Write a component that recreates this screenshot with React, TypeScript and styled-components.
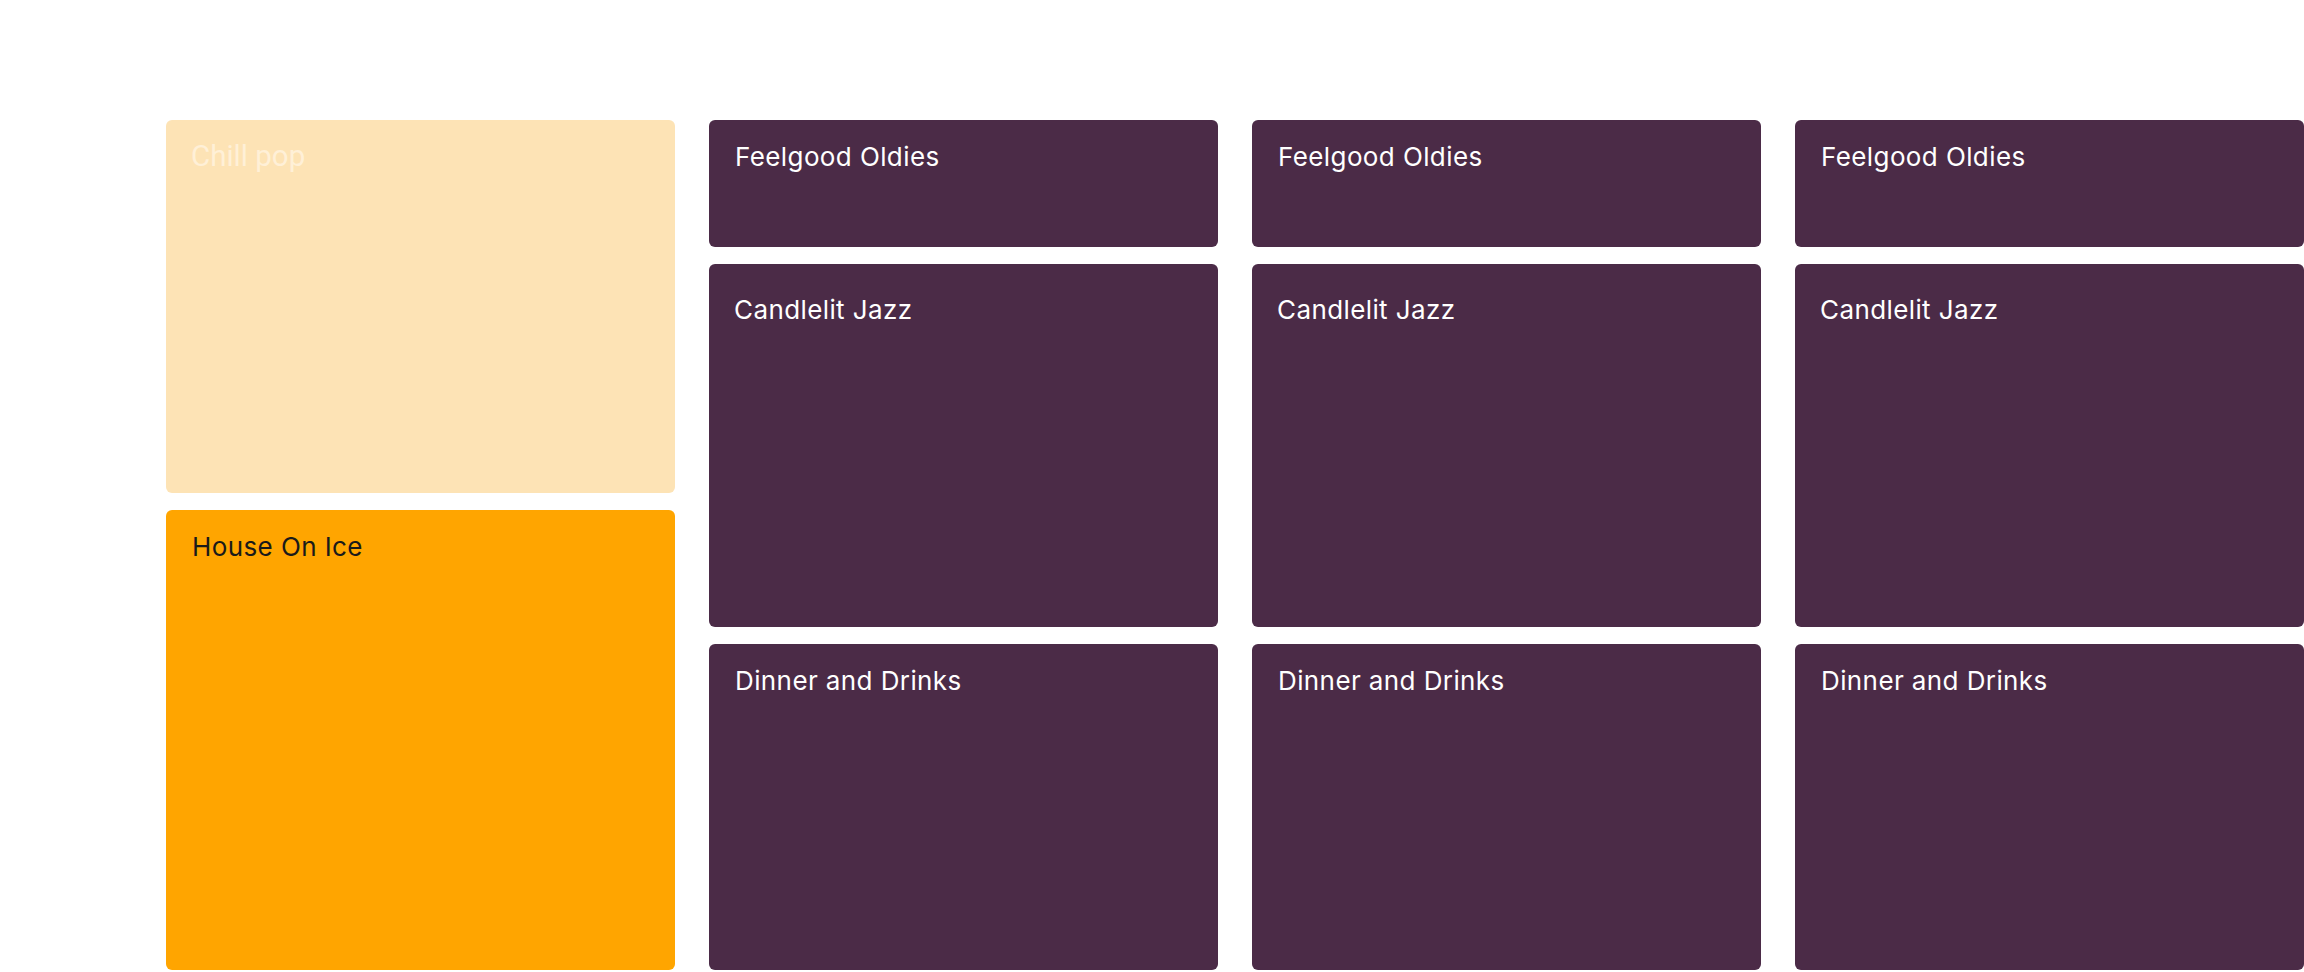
import React from "react";
import styled, { createGlobalStyle } from "styled-components";

const GlobalStyle = createGlobalStyle`
  html, body {
    margin: 0;
    padding: 0;
    background: #ffffff;
    overflow: hidden;
  }
`;

const Page = styled.div`
  display: flex;
  gap: 34px;
  padding: 120px 0 0 166px;
  width: 2304px;
  height: 972px;
  box-sizing: border-box;
`;

const Column = styled.div`
  display: flex;
  flex-direction: column;
  gap: 17px;
  width: 509px;
  flex-shrink: 0;
`;

type Tone = "mood" | "pale" | "bright";

const tones: Record<Tone, { bg: string; fg: string }> = {
  mood: { bg: "#4b2b47", fg: "#ffffff" },
  pale: { bg: "#fde3b5", fg: "#fff0d7" },
  bright: { bg: "#ffa500", fg: "#1a1a1a" },
};

const Tile = styled.div<{ $tone: Tone; $height: number; $drop?: number }>`
  height: ${(p) => p.$height}px;
  flex-shrink: 0;
  border-radius: 6px;
  background: ${(p) => tones[p.$tone].bg};
  color: ${(p) => tones[p.$tone].fg};
  padding: ${(p) => 24 + (p.$drop ?? 0)}px 26px 24px ${(p) => (p.$drop ? 25 : 26)}px;
  box-sizing: border-box;
`;

const Title = styled.h3<{ $plain?: boolean }>`
  margin: 0;
  font-family: ${(p) =>
    p.$plain ? "Roboto, 'Liberation Sans', sans-serif" : "Inter, 'Noto Sans', sans-serif"};
  font-size: ${(p) => (p.$plain ? "29.5px" : "26px")};
  font-weight: 400;
  line-height: 1;
  letter-spacing: ${(p) => (p.$plain ? "0" : "0.4px")};
  margin-left: ${(p) => (p.$plain ? "-1px" : "0")};
  margin-top: ${(p) => (p.$plain ? "-2px" : "0")};
`;

const playlistColumns = [0, 1, 2];

const App = () => {
  return (
    <>
      <GlobalStyle />
      <Page>
        <Column>
          <Tile $tone="pale" $height={373}>
            <Title $plain>Chill pop</Title>
          </Tile>
          <Tile $tone="bright" $height={460}>
            <Title>House On Ice</Title>
          </Tile>
        </Column>
        {playlistColumns.map((i) => (
          <Column key={i}>
            <Tile $tone="mood" $height={127}>
              <Title>Feelgood Oldies</Title>
            </Tile>
            <Tile $tone="mood" $height={363} $drop={9}>
              <Title>Candlelit Jazz</Title>
            </Tile>
            <Tile $tone="mood" $height={326}>
              <Title>Dinner and Drinks</Title>
            </Tile>
          </Column>
        ))}
      </Page>
    </>
  );
};

export default App;
